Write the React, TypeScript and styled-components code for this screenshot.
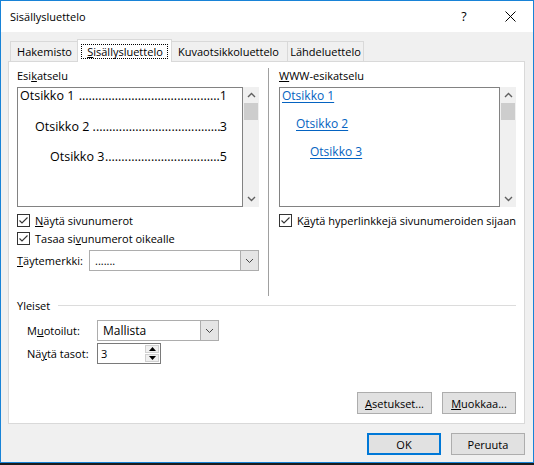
import React from "react";
import styled, { createGlobalStyle } from "styled-components";

const GlobalStyle = createGlobalStyle`
  html, body {
    margin: 0;
    padding: 0;
    background: #1c1c1c;
  }
  body {
    font-family: "Open Sans", "Noto Sans", sans-serif;
    font-size: 11px;
    color: #000;
  }
`;

const Window = styled.div`
  width: 534px;
  height: 463px;
  box-sizing: border-box;
  border: 1px solid #1883d7;
  background: #f0f0f0;
  display: flex;
  flex-direction: column;
`;

const TitleBar = styled.div`
  height: 31px;
  flex: none;
  background: #fff;
  display: flex;
  align-items: center;
  padding-left: 9px;
`;

const Title = styled.div`
  flex: 1;
  font-size: 11px;
`;

const CaptionButton = styled.div`
  width: 46px;
  height: 31px;
  display: flex;
  align-items: center;
  justify-content: center;
  font-size: 12.5px;
`;

const Body = styled.div`
  flex: 1;
  display: flex;
  flex-direction: column;
  padding: 7px 8px 7px 7px;
`;

const TabStrip = styled.div`
  height: 22px;
  display: flex;
  align-items: flex-end;
  padding-left: 2px;
`;

const Tab = styled.div<{ $width: number; $first?: boolean }>`
  width: ${(p) => p.$width}px;
  height: 20px;
  box-sizing: border-box;
  border-top: 1px solid #d9d9d9;
  border-right: 1px solid #d9d9d9;
  border-left: ${(p) => (p.$first ? "1px solid #d9d9d9" : "none")};
  background: #f0f0f0;
  display: flex;
  align-items: center;
  justify-content: center;
  color: #000;
`;

const ActiveTab = styled.div`
  position: relative;
  z-index: 2;
  width: 95px;
  height: 23px;
  margin: 0 -2px -1px -2px;
  box-sizing: border-box;
  border: 1px solid #d9d9d9;
  border-bottom: none;
  background: #fff;
  display: flex;
  align-items: center;
  justify-content: center;
`;

const FocusRing = styled.span`
  outline: 1px dotted #000;
  padding: 0 4px 0 5px;
  line-height: 13px;
`;

const U = styled.span`
  text-decoration: underline;
  text-underline-offset: 1px;
`;

const Panel = styled.div`
  height: 363px;
  box-sizing: border-box;
  border: 1px solid #d9d9d9;
  background: #fff;
  padding: 0 8px 9px 8px;
  display: flex;
  flex-direction: column;
`;

const TopSection = styled.div`
  height: 234px;
  display: flex;
  flex: none;
`;

const Column = styled.div<{ $width?: number }>`
  display: flex;
  flex-direction: column;
  padding-top: 6px;
  ${(p) => (p.$width ? `width: ${p.$width}px;` : "flex: 1;")}
`;

const Divider = styled.div`
  width: 1px;
  margin: 6px 10px 0 9px;
  background: #a0a0a0;
`;

const FieldLabel = styled.div`
  line-height: 15px;
  height: 15px;
  margin-bottom: 4px;
`;

const PreviewFrame = styled.div`
  height: 120px;
  display: flex;
`;

const PreviewBox = styled.div`
  flex: 1;
  box-sizing: border-box;
  border: 1px solid #828282;
  background: #fff;
  padding: 0 15px 0 2px;
  overflow: hidden;
`;

const TocLine = styled.div<{ $level: number }>`
  display: flex;
  height: 30.5px;
  line-height: 16px;
  font-size: 12.5px;
  padding-left: ${(p) => p.$level * 15}px;
  white-space: pre;
`;

const Leader = styled.span`
  flex: 1;
  min-width: 0;
  overflow: hidden;
  text-align: right;
  white-space: nowrap;
`;

const LinkLine = styled.div<{ $level: number }>`
  height: 28px;
  line-height: 16px;
  font-size: 12px;
  padding-left: ${(p) => p.$level * 14}px;
`;

const Link = styled.span`
  color: #0563c1;
  text-decoration: underline;
  text-underline-offset: 2px;
`;

const ScrollTrack = styled.div`
  width: 16px;
  background: #f0f0f0;
  display: flex;
  flex-direction: column;
  align-items: stretch;
`;

const ScrollArrow = styled.div`
  height: 16px;
  display: flex;
  align-items: center;
  justify-content: center;
`;

const ScrollThumb = styled.div`
  height: 17px;
  margin: 0 1px;
  background: #cdcdcd;
`;

const ScrollSpace = styled.div`
  flex: 1;
`;

const CheckRow = styled.div<{ $gap?: number }>`
  display: flex;
  align-items: center;
  height: 16px;
  margin-top: ${(p) => p.$gap ?? 5}px;
  gap: 5px;
`;

const CheckBox = styled.span`
  width: 13px;
  height: 13px;
  box-sizing: border-box;
  border: 1px solid #333;
  background: #fff;
  display: inline-flex;
  align-items: center;
  justify-content: center;
  flex: none;
`;

const FieldRow = styled.div<{ $top: number; $indent?: number }>`
  display: flex;
  align-items: center;
  margin-top: ${(p) => p.$top}px;
  padding-left: ${(p) => p.$indent ?? 0}px;
`;

const RowLabel = styled.span<{ $width: number }>`
  width: ${(p) => p.$width}px;
  flex: none;
`;

const Combo = styled.div<{ $width: number }>`
  width: ${(p) => p.$width}px;
  height: 21px;
  box-sizing: border-box;
  border: 1px solid #adadad;
  background: #fff;
  display: flex;
`;

const ComboText = styled.span<{ $size?: number }>`
  flex: 1;
  padding-left: 5px;
  display: flex;
  align-items: center;
  font-size: ${(p) => p.$size ?? 11}px;
`;

const ComboButton = styled.span`
  width: 17px;
  border-left: 1px solid #adadad;
  background: #e5e5e5;
  display: flex;
  align-items: center;
  justify-content: center;
`;

const Spin = styled.div`
  width: 64px;
  height: 21px;
  box-sizing: border-box;
  border: 1px solid #7a7a7a;
  background: #fff;
  display: flex;
`;

const SpinText = styled.span`
  flex: 1;
  padding-left: 3px;
  display: flex;
  align-items: center;
`;

const SpinButtons = styled.span`
  width: 14px;
  margin: 1px 1px 1px 0;
  display: flex;
  flex-direction: column;
  gap: 1px;
`;

const SpinButton = styled.span`
  flex: 1;
  background: #f0f0f0;
  border: 1px solid #d0d0d0;
  display: flex;
  align-items: center;
  justify-content: center;
`;

const GroupHeader = styled.div`
  display: flex;
  align-items: center;
  height: 15px;
  margin-top: 2px;
  gap: 8px;
`;

const GroupLine = styled.span`
  flex: 1;
  height: 1px;
  background: #dcdcdc;
`;

const ButtonRow = styled.div<{ $top?: string }>`
  display: flex;
  justify-content: flex-end;
  gap: 10px;
  margin-top: ${(p) => p.$top ?? "auto"};
`;

const Button = styled.div<{ $width?: number; $default?: boolean }>`
  width: ${(p) => p.$width ?? 74}px;
  height: 22px;
  box-sizing: border-box;
  border: ${(p) => (p.$default ? "2px solid #0078d7" : "1px solid #adadad")};
  background: #e1e1e1;
  display: flex;
  align-items: center;
  justify-content: center;
`;

const tocEntries = [
  { title: "Otsikko 1", page: "1", dots: 43 },
  { title: "Otsikko 2 ", page: "3", dots: 39 },
  { title: "Otsikko 3", page: "5", dots: 35 },
];

const ChevronUp = () => (
  <svg width="9" height="6" viewBox="0 0 9 6">
    <path d="M1 5 L4.5 1.5 L8 5" fill="none" stroke="#606060" strokeWidth="1.4" />
  </svg>
);

const ChevronDown = ({ color = "#606060", w = 1.4 }: { color?: string; w?: number }) => (
  <svg width="9" height="6" viewBox="0 0 9 6">
    <path d="M1 1 L4.5 4.5 L8 1" fill="none" stroke={color} strokeWidth={w} />
  </svg>
);

const ScrollBar = () => (
  <ScrollTrack>
    <ScrollArrow>
      <ChevronUp />
    </ScrollArrow>
    <ScrollThumb />
    <ScrollSpace />
    <ScrollArrow>
      <ChevronDown />
    </ScrollArrow>
  </ScrollTrack>
);

const Check = () => (
  <CheckBox>
    <svg width="11" height="11" viewBox="0 0 11 11">
      <path d="M1.5 5.5 L4 8 L9.5 2.5" fill="none" stroke="#333" strokeWidth="1.1" />
    </svg>
  </CheckBox>
);

const DropArrow = () => <ChevronDown color="#444" w={1} />;

export default function App() {
  return (
    <>
      <GlobalStyle />
      <Window>
        <TitleBar>
          <Title>Sisällysluettelo</Title>
          <CaptionButton>?</CaptionButton>
          <CaptionButton>
            <svg width="11" height="11" viewBox="0 0 11 11">
              <path d="M0.5 0.5 L10.5 10.5 M10.5 0.5 L0.5 10.5" stroke="#000" strokeWidth="1" />
            </svg>
          </CaptionButton>
        </TitleBar>
        <Body>
          <TabStrip>
            <Tab $width={69} $first>
              Hakemisto
            </Tab>
            <ActiveTab>
              <FocusRing>
                <U>S</U>isällysluettelo
              </FocusRing>
            </ActiveTab>
            <Tab $width={118}>Kuvaotsikkoluettelo</Tab>
            <Tab $width={76}>Lähdeluettelo</Tab>
          </TabStrip>
          <Panel>
            <TopSection>
              <Column $width={242}>
                <FieldLabel>
                  Esi<U>k</U>atselu
                </FieldLabel>
                <PreviewFrame>
                  <PreviewBox>
                    {tocEntries.map((e, i) => (
                      <TocLine key={e.page} $level={i}>
                        <span>{e.title}</span>
                        <Leader>{".".repeat(e.dots)}</Leader>
                        <span>{e.page}</span>
                      </TocLine>
                    ))}
                  </PreviewBox>
                  <ScrollBar />
                </PreviewFrame>
                <CheckRow>
                  <Check />
                  <span>
                    <U>N</U>äytä sivunumerot
                  </span>
                </CheckRow>
                <CheckRow $gap={2}>
                  <Check />
                  <span>
                    Tasaa si<U>v</U>unumerot oikealle
                  </span>
                </CheckRow>
                <FieldRow $top={4}>
                  <RowLabel $width={72}>
                    <U>T</U>äytemerkki:
                  </RowLabel>
                  <Combo $width={170}>
                    <ComboText>.......</ComboText>
                    <ComboButton>
                      <DropArrow />
                    </ComboButton>
                  </Combo>
                </FieldRow>
              </Column>
              <Divider />
              <Column>
                <FieldLabel>
                  <U>W</U>WW-esikatselu
                </FieldLabel>
                <PreviewFrame>
                  <PreviewBox>
                    <LinkLine $level={0}>
                      <Link>Otsikko 1</Link>
                    </LinkLine>
                    <LinkLine $level={1}>
                      <Link>Otsikko 2</Link>
                    </LinkLine>
                    <LinkLine $level={2}>
                      <Link>Otsikko 3</Link>
                    </LinkLine>
                  </PreviewBox>
                  <ScrollBar />
                </PreviewFrame>
                <CheckRow>
                  <Check />
                  <span>
                    K<U>ä</U>ytä hyperlinkkejä sivunumeroiden sijaan
                  </span>
                </CheckRow>
              </Column>
            </TopSection>
            <GroupHeader>
              <span>Yleiset</span>
              <GroupLine />
            </GroupHeader>
            <FieldRow $top={7} $indent={10}>
              <RowLabel $width={70}>
                M<U>u</U>otoilut:
              </RowLabel>
              <Combo $width={122}>
                <ComboText $size={12}>Mallista</ComboText>
                <ComboButton>
                  <DropArrow />
                </ComboButton>
              </Combo>
            </FieldRow>
            <FieldRow $top={2} $indent={10}>
              <RowLabel $width={70}>
                Nä<U>y</U>tä tasot:
              </RowLabel>
              <Spin>
                <SpinText>3</SpinText>
                <SpinButtons>
                  <SpinButton>
                    <svg width="7" height="4" viewBox="0 0 7 4">
                      <path d="M0 4 L3.5 0 L7 4 Z" fill="#000" />
                    </svg>
                  </SpinButton>
                  <SpinButton>
                    <svg width="7" height="4" viewBox="0 0 7 4">
                      <path d="M0 0 L3.5 4 L7 0 Z" fill="#000" />
                    </svg>
                  </SpinButton>
                </SpinButtons>
              </Spin>
            </FieldRow>
            <ButtonRow>
              <Button $width={75}>
                <span>
                  <U>A</U>setukset...
                </span>
              </Button>
              <Button $width={74}>
                <span>
                  <U>M</U>uokkaa...
                </span>
              </Button>
            </ButtonRow>
          </Panel>
          <ButtonRow $top="9px">
            <Button $default>OK</Button>
            <Button>Peruuta</Button>
          </ButtonRow>
        </Body>
      </Window>
    </>
  );
}
